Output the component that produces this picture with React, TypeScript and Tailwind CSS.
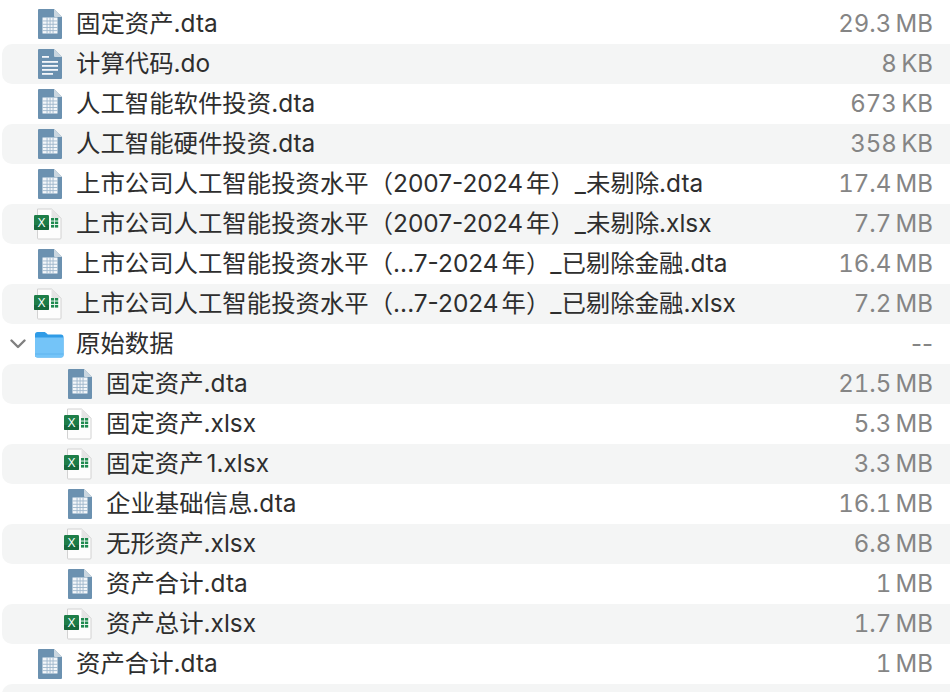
import React from "react";

type Kind = "dta" | "do" | "xlsx" | "folder" | "none";

type Row = {
  name: string;
  size: string;
  kind: Kind;
  nested?: boolean;
};

const rows: Row[] = [
  { name: "固定资产.dta", size: "29.3\u2009MB", kind: "dta" },
  { name: "计算代码.do", size: "8\u2009KB", kind: "do" },
  { name: "人工智能软件投资.dta", size: "673\u2009KB", kind: "dta" },
  { name: "人工智能硬件投资.dta", size: "358\u2009KB", kind: "dta" },
  { name: "上市公司人工智能投资水平（2007-2024年）_未剔除.dta", size: "17.4\u2009MB", kind: "dta" },
  { name: "上市公司人工智能投资水平（2007-2024年）_未剔除.xlsx", size: "7.7\u2009MB", kind: "xlsx" },
  { name: "上市公司人工智能投资水平（...7-2024年）_已剔除金融.dta", size: "16.4\u2009MB", kind: "dta" },
  { name: "上市公司人工智能投资水平（...7-2024年）_已剔除金融.xlsx", size: "7.2\u2009MB", kind: "xlsx" },
  { name: "原始数据", size: "--", kind: "folder" },
  { name: "固定资产.dta", size: "21.5\u2009MB", kind: "dta", nested: true },
  { name: "固定资产.xlsx", size: "5.3\u2009MB", kind: "xlsx", nested: true },
  { name: "固定资产1.xlsx", size: "3.3\u2009MB", kind: "xlsx", nested: true },
  { name: "企业基础信息.dta", size: "16.1\u2009MB", kind: "dta", nested: true },
  { name: "无形资产.xlsx", size: "6.8\u2009MB", kind: "xlsx", nested: true },
  { name: "资产合计.dta", size: "1\u2009MB", kind: "dta", nested: true },
  { name: "资产总计.xlsx", size: "1.7\u2009MB", kind: "xlsx", nested: true },
  { name: "资产合计.dta", size: "1\u2009MB", kind: "dta" },
  { name: "", size: "", kind: "none" },
];

function BlueDoc({ lines }: { lines?: boolean }) {
  return (
    <svg className="translate-x-px" width="24" height="30" viewBox="0 0 24 30">
      <path d="M0 1a1 1 0 0 1 1-1h15l8 8v21a1 1 0 0 1-1 1H1a1 1 0 0 1-1-1z" fill="#6b91b0" />
      <path d="M16 0l8 8h-7a1 1 0 0 1-1-1z" fill="#c9d6e0" />
      {lines ? (
        <g fill="#f4f7fa">
          <rect x="4" y="7" width="7" height="1.8" />
          <rect x="4" y="12" width="16" height="1.8" />
          <rect x="4" y="16" width="16" height="1.8" />
          <rect x="4" y="20" width="16" height="1.8" />
          <rect x="4" y="24" width="11" height="1.8" />
        </g>
      ) : (
        <g>
          <rect x="4.500" y="8.500" width="15" height="16" fill="#f4f7fa" />
          <g fill="#9db6cb">
            <rect x="8.600" y="8.500" width="0.9" height="16" />
            <rect x="11.600" y="8.500" width="0.9" height="16" />
            <rect x="14.600" y="8.500" width="0.9" height="16" />
            <rect x="4.500" y="11.500" width="15" height="0.9" />
            <rect x="4.500" y="14.800" width="15" height="0.9" />
            <rect x="4.500" y="18" width="15" height="0.9" />
            <rect x="4.500" y="21.200" width="15" height="0.9" />
          </g>
        </g>
      )}
    </svg>
  );
}

function ExcelDoc() {
  return (
    <svg className="-translate-x-px" width="28" height="32" viewBox="0 0 28 32">
      <path d="M3.500 1h14L27 10v20a1 1 0 0 1-1 1H4.500a1 1 0 0 1-1-1z" fill="#fdfdfd" stroke="#d2d2d2" />
      <path d="M17.500 1L27 10h-8.500a1 1 0 0 1-1-1z" fill="#e4e4e4" />
      <g fill="#1f8a4f">
        <rect x="17" y="10" width="3.200" height="2.600" />
        <rect x="21" y="10" width="3.200" height="2.600" />
        <rect x="17" y="13.500" width="3.200" height="2.600" />
        <rect x="21" y="13.500" width="3.200" height="2.600" />
        <rect x="17" y="17" width="3.200" height="2.600" />
        <rect x="21" y="17" width="3.200" height="2.600" />
      </g>
      <rect x="0" y="7" width="15" height="15" rx="1.200" fill="#1d7d48" />
      <path d="M0 17h15v3.800a1.200 1.200 0 0 1-1.200 1.200H1.200A1.200 1.200 0 0 1 0 20.800z" fill="#17683b" />
      <text x="7.500" y="19" textAnchor="middle" fontSize="12" fontWeight="400" fill="#ffffff" fontFamily="Liberation Sans, sans-serif">X</text>
    </svg>
  );
}

function Folder() {
  return (
    <svg width="30" height="27" viewBox="0 0 30 27">
      <path d="M1 3.500A2.500 2.500 0 0 1 3.500 1h6.500c1 0 1.500.4 2.200 1.100L13.800 3.500H27a2.500 2.500 0 0 1 2.500 2.500v18a2.500 2.500 0 0 1-2.500 2.500H3.500A2.500 2.500 0 0 1 1 24z" fill="#2f9be6" />
      <path d="M1 6.500h28.500V24a2.500 2.500 0 0 1-2.500 2.500H3.500A2.500 2.500 0 0 1 1 24z" fill="#74c4f8" />
      <rect x="1" y="22.500" width="28.500" height="1" fill="#5fb4ee" />
    </svg>
  );
}

function Chevron() {
  return (
    <svg width="16" height="10" viewBox="0 0 16 10" fill="none">
      <path d="M1.500 1.500L8 8l6.500-6.500" stroke="#808080" strokeWidth="2.400" strokeLinecap="round" strokeLinejoin="round" />
    </svg>
  );
}

function FileIcon({ kind }: { kind: Kind }) {
  if (kind === "dta") return <BlueDoc />;
  if (kind === "do") return <BlueDoc lines />;
  if (kind === "xlsx") return <ExcelDoc />;
  if (kind === "folder") return <Folder />;
  return null;
}

export default function App() {
  return (
    <div
      className="h-[692px] w-[950px] overflow-hidden bg-white pt-1"
      style={{ fontFamily: 'Inter, "Noto Sans CJK SC", sans-serif' }}
    >
      {rows.map((row, i) => (
        <div
          key={i}
          className={`flex h-10 items-center rounded-l-[10px] pr-[17px] ${
            i % 2 === 1 ? "ml-[2px] bg-[#f4f5f5]" : "ml-[2px]"
          } ${row.nested ? "pl-[60px]" : "pl-[30px]"}`}
        >
          <div className="relative flex h-8 w-[34px] shrink-0 items-center justify-center">
            {row.kind === "folder" && (
              <span className="absolute left-[-22px] top-[11px]">
                <Chevron />
              </span>
            )}
            <FileIcon kind={row.kind} />
          </div>
          <span className="mb-[2px] ml-[10px] flex-1 whitespace-pre text-[24.400px] text-[#2e2e2e] [text-autospace:normal]">{row.name}</span>
          <span className={`text-[24px] text-[#858585] ${row.kind === "folder" ? "" : "tabular-nums"}`}>{row.size}</span>
        </div>
      ))}
    </div>
  );
}
